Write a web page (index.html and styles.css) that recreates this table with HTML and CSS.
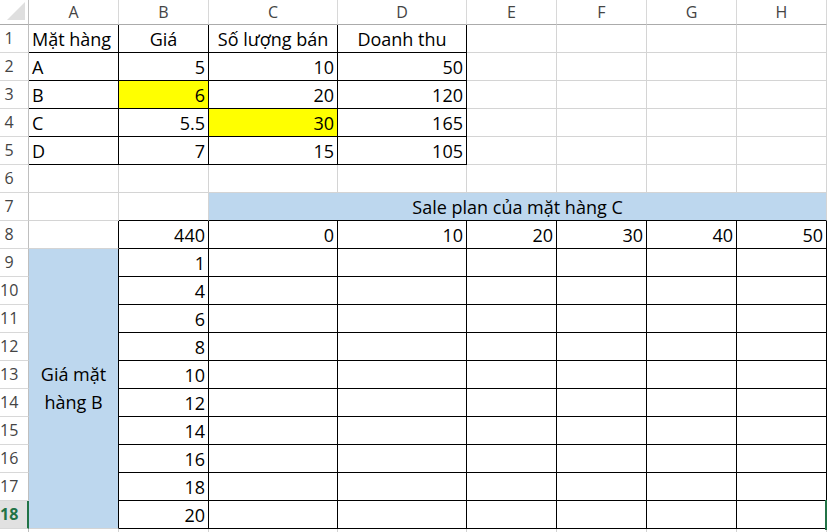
FILE: index.html
```html
<!DOCTYPE html>
<html lang="vi">
<head>
<meta charset="utf-8">
<title>Sheet</title>
<link rel="stylesheet" href="styles.css">
</head>
<body>
<div class="sheet">
  <div class="corner"><svg class="tri" width="28" height="24" viewBox="0 0 28 24"><polygon points="7,20 25,20 25,2" fill="#dfdfdf"/></svg></div>
  <div class="ch">A</div><div class="ch">B</div><div class="ch">C</div><div class="ch">D</div><div class="ch">E</div><div class="ch">F</div><div class="ch">G</div><div class="ch">H</div>

  <div class="rh">1</div>
  <div class="c bx l">Mặt hàng</div><div class="c bx m">Giá</div><div class="c bx m">Số lượng bán</div><div class="c bx m">Doanh thu</div><div class="c"></div><div class="c"></div><div class="c"></div><div class="c"></div>

  <div class="rh">2</div>
  <div class="c bx l">A</div><div class="c bx">5</div><div class="c bx">10</div><div class="c bx">50</div><div class="c"></div><div class="c"></div><div class="c"></div><div class="c"></div>

  <div class="rh">3</div>
  <div class="c bx l">B</div><div class="c bx yel">6</div><div class="c bx">20</div><div class="c bx">120</div><div class="c"></div><div class="c"></div><div class="c"></div><div class="c"></div>

  <div class="rh">4</div>
  <div class="c bx l">C</div><div class="c bx">5.5</div><div class="c bx yel">30</div><div class="c bx">165</div><div class="c"></div><div class="c"></div><div class="c"></div><div class="c"></div>

  <div class="rh">5</div>
  <div class="c bx l">D</div><div class="c bx">7</div><div class="c bx">15</div><div class="c bx">105</div><div class="c"></div><div class="c"></div><div class="c"></div><div class="c"></div>

  <div class="rh">6</div>
  <div class="c"></div><div class="c"></div><div class="c"></div><div class="c"></div><div class="c"></div><div class="c"></div><div class="c"></div><div class="c"></div>

  <div class="rh">7</div>
  <div class="c"></div><div class="c bb"></div><div class="c bb blue m span6">Sale plan của mặt hàng C</div>

  <div class="rh">8</div>
  <div class="c br"></div><div class="c bx">440</div><div class="c bx">0</div><div class="c bx">10</div><div class="c bx">20</div><div class="c bx">30</div><div class="c bx">40</div><div class="c bx">50</div>

  <div class="rh">9</div>
  <div class="c br blue vmerge">Giá mặt<br>hàng B</div><div class="c bx">1</div><div class="c bx"></div><div class="c bx"></div><div class="c bx"></div><div class="c bx"></div><div class="c bx"></div><div class="c bx"></div>

  <div class="rh">10</div>
  <div class="c bx">4</div><div class="c bx"></div><div class="c bx"></div><div class="c bx"></div><div class="c bx"></div><div class="c bx"></div><div class="c bx"></div>

  <div class="rh">11</div>
  <div class="c bx">6</div><div class="c bx"></div><div class="c bx"></div><div class="c bx"></div><div class="c bx"></div><div class="c bx"></div><div class="c bx"></div>

  <div class="rh">12</div>
  <div class="c bx">8</div><div class="c bx"></div><div class="c bx"></div><div class="c bx"></div><div class="c bx"></div><div class="c bx"></div><div class="c bx"></div>

  <div class="rh">13</div>
  <div class="c bx">10</div><div class="c bx"></div><div class="c bx"></div><div class="c bx"></div><div class="c bx"></div><div class="c bx"></div><div class="c bx"></div>

  <div class="rh">14</div>
  <div class="c bx">12</div><div class="c bx"></div><div class="c bx"></div><div class="c bx"></div><div class="c bx"></div><div class="c bx"></div><div class="c bx"></div>

  <div class="rh">15</div>
  <div class="c bx">14</div><div class="c bx"></div><div class="c bx"></div><div class="c bx"></div><div class="c bx"></div><div class="c bx"></div><div class="c bx"></div>

  <div class="rh">16</div>
  <div class="c bx">16</div><div class="c bx"></div><div class="c bx"></div><div class="c bx"></div><div class="c bx"></div><div class="c bx"></div><div class="c bx"></div>

  <div class="rh">17</div>
  <div class="c bx">18</div><div class="c bx"></div><div class="c bx"></div><div class="c bx"></div><div class="c bx"></div><div class="c bx"></div><div class="c bx"></div>

  <div class="rh sel">18</div>
  <div class="c bx">20</div><div class="c bx"></div><div class="c bx"></div><div class="c bx"></div><div class="c bx"></div><div class="c bx"></div><div class="c bx"></div>

  <div class="rh"></div>
  <div class="c"></div><div class="c"></div><div class="c"></div><div class="c"></div><div class="c"></div><div class="c"></div><div class="c"></div><div class="c"></div>

  <div class="selbox"></div>
</div>
</body>
</html>
```

FILE: styles.css
```css
html, body {
  margin: 0;
  padding: 0;
  background: #ffffff;
  overflow: hidden;
}

.sheet {
  position: relative;
  display: grid;
  grid-template-columns: 29px 90px 90px 129px 129px 90px 90px 90px 90px;
  grid-template-rows: 25px repeat(19, 28px);
  width: 827px;
  font-family: "Open Sans", "Noto Sans", sans-serif;
  font-size: 18px;
  color: #000;
}

.sheet > div {
  box-sizing: border-box;
  overflow: hidden;
  white-space: nowrap;
}

.corner {
  border-right: 1px solid #bfbfbf;
  border-bottom: 1px solid #ababab;
}

.tri {
  display: block;
}

.ch {
  border-right: 1px solid #d8d8d8;
  border-bottom: 1px solid #ababab;
  font-size: 16px;
  color: #444;
  text-align: center;
  line-height: 24px;
}

.rh {
  grid-column: 1;
  border-right: 1px solid #bfbfbf;
  border-bottom: 1px solid #d8d8d8;
  font-size: 16px;
  color: #444;
  text-align: center;
  line-height: 27px;
  padding-right: 10px;
  overflow: visible !important;
}

.rh.sel {
  background: #e1e1e1;
  color: #217346;
  font-weight: 700;
  border-right: 2px solid #217346;
}

.c {
  border-right: 1px solid #d4d4d4;
  border-bottom: 1px solid #d4d4d4;
  display: flex;
  align-items: flex-end;
  justify-content: flex-end;
  line-height: 24px;
  padding: 0 3px 1px 3px;
}

.c.l {
  justify-content: flex-start;
}

.c.m {
  justify-content: center;
}

.bx {
  border-right-color: #000;
  border-bottom-color: #000;
}

.bb {
  border-bottom-color: #000;
}

.br {
  border-right-color: #000;
}

.yel {
  background: #ffff00;
}

.blue {
  background: #bdd7ee;
}

.span6 {
  grid-column: 4 / 10;
}

.vmerge {
  grid-row: span 10;
  align-items: center;
  justify-content: center;
  text-align: center;
  line-height: 28px;
  white-space: normal !important;
}

.selbox {
  position: absolute;
  left: 825px;
  top: 500px;
  width: 20px;
  height: 30px;
  border: 2px solid #217346;
}
```
